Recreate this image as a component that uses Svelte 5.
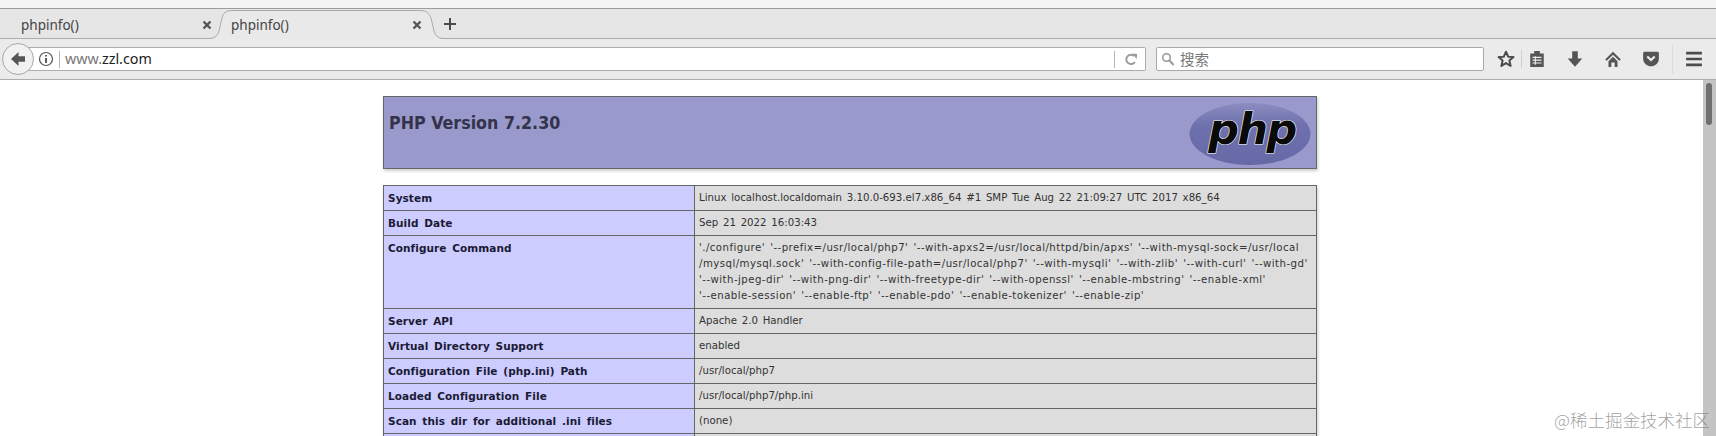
<script>
  const rows = [
    ['System', 'Linux localhost.localdomain 3.10.0-693.el7.x86_64 #1 SMP Tue Aug 22 21:09:27 UTC 2017 x86_64'],
    ['Build Date', 'Sep 21 2022 16:03:43'],
    ['Configure Command', "'./configure' '--prefix=/usr/local/php7' '--with-apxs2=/usr/local/httpd/bin/apxs' '--with-mysql-sock=/usr/local\n/mysql/mysql.sock' '--with-config-file-path=/usr/local/php7' '--with-mysqli' '--with-zlib' '--with-curl' '--with-gd'\n'--with-jpeg-dir' '--with-png-dir' '--with-freetype-dir' '--with-openssl' '--enable-mbstring' '--enable-xml'\n'--enable-session' '--enable-ftp' '--enable-pdo' '--enable-tokenizer' '--enable-zip'"],
    ['Server API', 'Apache 2.0 Handler'],
    ['Virtual Directory Support', 'enabled'],
    ['Configuration File (php.ini) Path', '/usr/local/php7'],
    ['Loaded Configuration File', '/usr/local/php7/php.ini'],
    ['Scan this dir for additional .ini files', '(none)'],
    ['', '']
  ];
</script>

<div class="win">
  <div class="topstrip"></div>
  <div class="tabbar">
    <div class="tab">
      <span class="tabtitle">phpinfo()</span>
      <svg class="close" viewBox="0 0 10 10"><path d="M1.500 1.500 8.500 8.500M8.500 1.500 1.500 8.500" stroke="#555" stroke-width="2.400"/></svg>
    </div>
    <div class="tab active">
      <svg class="tabshape" viewBox="0 0 237 30">
        <path d="M0 30C6 29.500 9 28 11 22L14 9C15 4 18 1.500 24 1.500H212C218 1.500 221 4 223 9L226 22C228 28 231 29.500 237 30Z" fill="#e9e9e9"/>
        <path d="M0 29.500C6 29.500 9 28 11 22L14 9C15 4 18 1.500 24 1.500H212C218 1.500 221 4 223 9L226 22C228 28 231 29.500 237 29.500" fill="none" stroke="#ababab"/>
      </svg>
      <span class="tabtitle">phpinfo()</span>
      <svg class="close" viewBox="0 0 10 10"><path d="M1.500 1.500 8.500 8.500M8.500 1.500 1.500 8.500" stroke="#555" stroke-width="2.400"/></svg>
    </div>
    <svg class="plus" viewBox="0 0 14 14"><path d="M7 1V13M1 7H13" stroke="#4a4a4a" stroke-width="2"/></svg>
  </div>
  <div class="navbar">
    <div class="back">
      <svg viewBox="0 0 16 16"><path d="M8.500 1 1 8 8.500 15V10.700H15V5.300H8.500Z" fill="#565656"/></svg>
    </div>
    <div class="urlbar">
      <svg class="info" viewBox="0 0 16 16"><circle cx="8" cy="8" r="6.500" fill="none" stroke="#555" stroke-width="1.200"/><path d="M8 7V12M8 4V5.600" stroke="#444" stroke-width="1.700"/></svg>
      <span class="sep"></span>
      <span class="url"><span class="dim">www.</span>zzl.com</span>
      <span class="sep end"></span>
      <svg class="reload" viewBox="0 0 16 16"><path d="M11.600 10.600A5 5 0 1 1 11 4.400" fill="none" stroke="#999" stroke-width="2"/><path d="M9 1.500 14 2 13.500 7.500Z" fill="#999"/></svg>
    </div>
    <div class="search">
      <svg viewBox="0 0 16 16"><circle cx="6.300" cy="6.300" r="4.300" fill="none" stroke="#999" stroke-width="1.800"/><path d="M9.500 9.500 14.500 15" stroke="#999" stroke-width="2.400"/></svg>
      <span>搜索</span>
    </div>
    <div class="tools">
      <svg class="star" viewBox="0 0 16 16"><path d="M8 1.500 9.900 5.900 14.600 6.300 11 9.400 12.100 14.100 8 11.600 3.900 14.100 5 9.400 1.400 6.300 6.100 5.900Z" fill="none" stroke="#4c4c4c" stroke-width="1.800" stroke-linejoin="round"/></svg>
      <span class="toolsep"></span>
      <svg class="clip" viewBox="0 0 16 16"><path d="M2 3H5.500V0.800H10.500V3H14V15.200H2Z" fill="#555"/><path d="M4 6.500H12M4 9H12M4 11.500H12M6.500 5.500V13" stroke="#eee" stroke-width="1"/></svg>
      <svg class="down" viewBox="0 0 16 16"><path d="M5.500 1H10.500V7.500H14.500L8 14.800 1.500 7.500H5.500Z" fill="#555"/></svg>
      <svg class="home" viewBox="0 0 16 16"><path d="M8 1.500 15 8.500 13.500 9.500 8 4.200 2.500 9.500 1 8.500Z" fill="#555"/><path d="M4 10 8 6 12 10V15H9.500V11H6.500V15H4Z" fill="#555"/></svg>
      <svg class="pocket" viewBox="0 0 16 16"><path d="M2.500 1.500H13.500C14.500 1.500 15 2 15 3V7.500C15 11.500 11.500 14.500 8 14.500S1 11.500 1 7.500V3C1 2 1.500 1.500 2.500 1.500Z" fill="#555"/><path d="M4.700 5.800 8 9 11.300 5.800" fill="none" stroke="#eee" stroke-width="1.900"/></svg>
      <span class="toolsep menu-sep"></span>
      <svg class="menu" viewBox="0 0 16 16"><path d="M1 2.800H15M1 8H15M1 13.200H15" stroke="#4c4c4c" stroke-width="2.300"/></svg>
    </div>
  </div>
  <div class="view">
    <main class="page">
      <div class="phpinfo">
        <section class="head">
          <h1>PHP Version 7.2.30</h1>
          <svg class="logo" viewBox="0 0 122 64">
            <defs>
              <linearGradient id="oval" x1="0" y1="0" x2="0" y2="1"><stop offset="0" stop-color="#8b8dc0"/><stop offset="0.35" stop-color="#6e71ad"/><stop offset="1" stop-color="#6769a6"/></linearGradient>
            </defs>
            <ellipse cx="61" cy="32" rx="60.500" ry="31" fill="url(#oval)"/>
            <text x="63" y="42" text-anchor="middle" class="logotext">php</text>
          </svg>
        </section>
        <table>
          <tbody>
            {#each rows as r, i}
              <tr><td class="e">{r[0]}</td><td class="v" class:cmd={i === 2}>{r[1]}</td></tr>
            {/each}
          </tbody>
        </table>
      </div>
    </main>
    <div class="scrollbar"><div class="thumb"></div></div>
    <div class="mark">@稀土掘金技术社区</div>
  </div>
</div>

<style>
  :global(body) { margin: 0; background: #fff; overflow: hidden; }
  .win { width: 1716px; height: 436px; overflow: hidden; display: flex; flex-direction: column; font-family: "Noto Sans", "Noto Sans CJK SC", sans-serif; }
  .topstrip { height: 8px; background: #f4f4f4; border-bottom: 1px solid #9d9d9d; }
  .tabbar { height: 29px; background: #e6e6e6; border-bottom: 1px solid #acacac; display: flex; align-items: stretch; padding-left: 1px; }
  .tab { width: 214px; height: 30px; position: relative; display: flex; align-items: center; justify-content: space-between; padding: 1px 3px 0 20px; box-sizing: border-box; flex: none; }
  .tab.active { width: 207px; padding: 1px 0 0 16px; z-index: 1; }
  .tabshape { position: absolute; left: -7px; top: 0; width: 237px; height: 30px; }
  .tabtitle { font-size: 13.500px; color: #444; position: relative; }
  .close { width: 10px; height: 10px; position: relative; }
  .plus { width: 14px; height: 14px; margin: 8px 0 0 21px; position: relative; z-index: 2; }
  .navbar { height: 40px; background: #ebebeb; border-bottom: 1px solid #acacac; display: flex; align-items: center; position: relative; box-sizing: content-box; }
  .back { width: 30px; height: 30px; border: 1px solid #a8a8a8; border-radius: 50%; background: #f1f1f1; position: relative; z-index: 1; margin-left: 2px; display: flex; align-items: center; justify-content: center; flex: none; }
  .back svg { width: 16px; height: 16px; }
  .urlbar { margin-left: -9px; width: 1107px; height: 22px; background: #fff; border: 1px solid #adadad; border-left: none; border-radius: 0 2px 2px 0; display: flex; align-items: center; flex: none; padding-left: 13px; box-sizing: content-box; }
  .info { width: 16px; height: 16px; flex: none; }
  .sep { width: 1px; height: 17px; background: #b5b5b5; margin: 0 5px; flex: none; }
  .url { font-size: 14.300px; color: #222; flex: 1; padding-bottom: 2px; }
  .dim { color: #777; }
  .sep.end { margin: 0 9px 0 0; }
  .reload { width: 15px; height: 15px; margin-right: 6px; flex: none; }
  .search { margin-left: 10px; width: 322px; height: 22px; background: #fff; border: 1px solid #a9a9a9; border-radius: 2px; display: flex; align-items: center; gap: 5px; padding-left: 4px; flex: none; color: #777; font-size: 14.500px; }
  .search svg { width: 14px; height: 14px; }
  .search span { padding-bottom: 2px; }
  .tools { display: flex; align-items: center; margin-left: 13px; position: relative; }
  .tools svg { width: 18px; height: 18px; flex: none; }
  .toolsep { width: 1px; height: 18px; background: #d0d0d0; margin: 0 6px; }
  .down, .home, .pocket { margin-left: 20px; }
  .menu-sep { margin: 0 12px 0 12px; height: 30px; background: #dcdcdc; }
  .view { flex: 1; display: flex; min-height: 0; position: relative; }
  .page { flex: 1; background: #fff; position: relative; overflow: hidden; }
  .phpinfo { width: 933px; margin: 16px 0 0 383px; font-family: "DejaVu Sans", sans-serif; }
  .head { height: 71px; background: #9999cc; border: 1px solid #666; box-shadow: 1px 2px 3px #ccc; position: relative; width: 932px; margin-bottom: 16px; }
  h1 { margin: 0; padding: 15px 0 0 5px; font-size: 17.700px; line-height: 22px; color: #33334a; font-weight: 700; font-family: "DejaVu Sans Condensed", "DejaVu Sans", sans-serif; }
  .logo { position: absolute; right: 5px; top: 5px; width: 122px; height: 64px; }
  .logotext { font-family: "DejaVu Sans", sans-serif; font-weight: 700; font-style: italic; font-size: 43px; letter-spacing: -1.500px; fill: #0a0a0a; stroke: #fff; stroke-width: 1.200px; paint-order: stroke; }
  table { border-collapse: collapse; width: 934px; table-layout: fixed; box-shadow: 1px 2px 3px #ccc; }
  td { border: 1px solid #666; font-size: 10.500px; line-height: 16px; height: 25px; padding: 4px; vertical-align: top; box-sizing: border-box; }
  .e { width: 311px; background: #ccccff; font-weight: 700; color: #1a1a33; word-spacing: 2px; letter-spacing: 0.070px; }
  .v { background: #dddddd; color: #333; font-size: 10.200px; word-spacing: 1.500px; white-space: pre; }
  .cmd { letter-spacing: 0.450px; }
  .mark { position: absolute; right: 6px; bottom: 6px; font-size: 17.500px; line-height: 20px; color: rgba(120,120,120,0.7); font-family: "Noto Sans CJK SC", sans-serif; font-weight: 300; }
  .scrollbar { width: 13px; background: #c4c4c4; flex: none; position: relative; }
  .thumb { position: absolute; left: 3px; top: 3px; width: 6px; height: 42px; border-radius: 3px; background: #6f6f6f; }
</style>
